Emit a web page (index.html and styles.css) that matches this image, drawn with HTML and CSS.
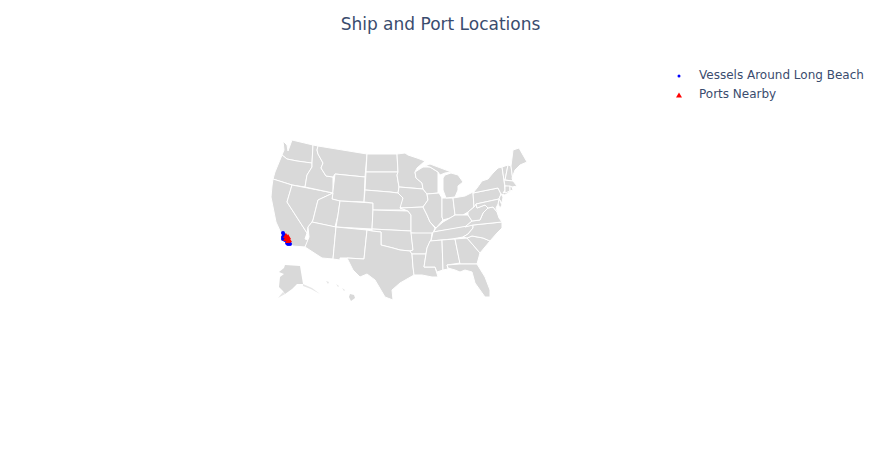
FILE: index.html
```html
<!DOCTYPE html>
<html lang="en">
<head>
<meta charset="utf-8">
<title>Ship and Port Locations</title>
<link rel="stylesheet" href="styles.css">
</head>
<body>
<main class="chart">
  <svg class="map" width="882" height="450" viewBox="0 0 882 450" aria-hidden="true">
    <g class="states">
      <path d="M283 141L287 145L288 151L292 140L313 145L312 163L310 163L297 161L287 159L282 155L284 150Z"/>
      <path d="M282 155L287 159L297 161L312 163L312 167L307 175L305 187L292 185L273 179L275 172Z"/>
      <path d="M273 179L292 185L287 202L307 233L305 239L309 240L305 247L293 246L286 240L281 233L276 222L271 197L272 186Z"/>
      <path d="M292 185L318 190L333 193L318 200L313 220L312 222L308 227L307 233L287 202Z"/>
      <path d="M313 145L318 146L317 150L318 154L323 163L321 168L326 176L333 177L333 193L305 187L307 175L312 167L312 163Z"/>
      <path d="M318 146L367 154L365 177L335 174L333 177L326 176L321 168L323 163L318 154L317 150Z"/>
      <path d="M335 174L365 177L364 202L340 201L332 199Z"/>
      <path d="M333 193L332 199L340 201L338 215L335 227L312 222L313 220L318 200Z"/>
      <path d="M340 201L373 203L373 210L372 229L336 227L338 215Z"/>
      <path d="M312 222L336 227L333 259L322 258L305 247L309 237L308 227Z"/>
      <path d="M336 227L367 230L364 259L347 258L340 258L340 260L333 259Z"/>
      <path d="M367 154L397 154L398 172L366 172Z"/>
      <path d="M366 172L398 172L397 175L399 187L398 193L390 192L365 190Z"/>
      <path d="M365 190L390 192L398 193L403 198L407 210L373 210L373 203L364 202Z"/>
      <path d="M373 210L408 211L411 215L411 231L372 229Z"/>
      <path d="M372 229L411 231L413 250L410 251L400 250L393 248L381 245L381 232L372 231Z"/>
      <path d="M367 230L372 231L381 232L381 245L393 248L400 250L410 251L412 254L413 267L414 275L400 283L392 290L393 300L385 297L375 280L367 274L360 277L353 270L347 258L364 259Z"/>
      <path d="M397 154L405 153L408 155L417 158L425 161L417 168L415 172L416 178L422 183L423 189L400 187L399 187L397 175L398 172Z"/>
      <path d="M399 187L423 189L427 194L428 200L423 207L400 208L403 198L398 193Z"/>
      <path d="M400 208L423 207L427 215L430 222L435 228L433 233L432 235L411 233L411 215L408 211Z"/>
      <path d="M411 233L432 233L431 240L427 248L426 254L412 254L410 251L413 250Z"/>
      <path d="M412 254L426 254L424 267L435 267L438 277L432 277L422 275L414 275L413 267Z"/>
      <path d="M415 172L423 167L430 167L438 172L438 193L427 194L423 189L422 183L416 178Z"/>
      <path d="M427 194L439 193L442 198L442 217L443 220L436 228L430 222L427 215L423 207L428 200Z"/>
      <path d="M442 198L453 198L455 215L450 218L443 220L442 217Z"/>
      <path d="M453 198L465 196L473 192L474 207L468 212L463 215L455 215Z"/>
      <path d="M425 166L430 164L438 167L446 170L451 172L445 173L440 175L438 172L430 167Z"/>
      <path d="M443 190L443 178L445 175L451 173L458 175L463 182L458 186L458 190L455 197L446 198Z"/>
      <path d="M433 233L436 228L443 222L450 218L455 215L463 215L468 215L472 221L465 227L433 232Z"/>
      <path d="M431 241L433 232L473 225L473 228L468 234L463 237L452 239Z"/>
      <path d="M430 241L442 240L443 270L437 272L435 267L424 267L426 254L427 248Z"/>
      <path d="M442 240L455 239L460 263L447 265L448 269L443 270Z"/>
      <path d="M455 239L467 238L480 253L477 264L460 264Z"/>
      <path d="M467 238L472 236L483 238L490 241L480 253Z"/>
      <path d="M473 225L502 222L502 228L497 233L490 241L483 238L472 236L467 238L463 237L468 234L473 228Z"/>
      <path d="M447 265L460 264L477 264L485 277L490 290L490 297L485 297L475 283L472 272L465 270L460 272L455 270L448 268Z"/>
      <path d="M465 227L472 221L480 220L483 213L488 208L493 207L497 212L499 218L502 222L473 225Z"/>
      <path d="M468 215L468 212L474 207L476 204L477 208L485 205L488 208L483 213L480 220L472 221Z"/>
      <path d="M473 193L498 188L501 194L499 199L476 204L474 207Z"/>
      <path d="M473 193L477 188L482 181L488 179L493 173L498 168L502 167L504 180L505 190L503 193L514 189L505 195L501 194L498 188Z"/>
      <path d="M501 194L503 197L502 203L499 199Z"/>
      <path d="M499 199L502 205L500 208L498 204Z"/>
      <path d="M477 208L476 204L499 199L498 204L496 208L498 213L493 207L488 208L485 205Z"/>
      <path d="M502 167L508 165L505 180L504 180Z"/>
      <path d="M508 165L511 166L513 181L505 180Z"/>
      <path d="M504 180L513 181L517 186L512 187L505 186Z"/>
      <path d="M505 186L510 186L510 191L505 193Z"/>
      <path d="M510 186L512 187L513 190L510 191Z"/>
      <path d="M511 166L513 150L519 148L527 162L520 165L515 170L512 178L513 181Z"/>
      <path class="outer" d="M285 265L300 266L303 284L297 284L292 289L285 294L283 291L279 287L280 277L284 274L279 272L284 268Z"/>
      <path class="faint" d="M303 284L312 288L320 294L311 289L303 286ZM285 294L278 298L283 292Z"/>
      <path class="outer" d="M350 294L354 295L355 298L351 301L349 297Z"/>
      <path class="faint" d="M326 281L329 282L328 284ZM336 284L339 286L338 287ZM342 288L345 290L344 291Z"/>
    </g>
    <g class="vessels">
      <circle cx="283" cy="233" r="2"/><circle cx="284" cy="235" r="2"/><circle cx="283" cy="237" r="2"/>
      <circle cx="283" cy="239" r="2"/><circle cx="285" cy="238" r="2"/><circle cx="285" cy="240" r="2"/>
      <circle cx="287" cy="243" r="2"/><circle cx="289" cy="243" r="2"/><circle cx="288" cy="244" r="2"/><circle cx="290" cy="244" r="2"/>
    </g>
    <g class="ports">
      <path d="M286 233L289 238L283 238Z"/><path d="M288 234L291 239L285 239Z"/>
      <path d="M286 236L289 241L283 241Z"/><path d="M289 237L292 242L286 242Z"/>
      <path d="M288 238L291 243L285 243Z"/>
    </g>
  </svg>
  <h1 class="title">Ship and Port Locations</h1>
  <ul class="legend">
    <li class="legend-item"><svg class="key" width="6" height="6" viewBox="0 0 6 6"><circle class="vessel-key" cx="3" cy="3" r="1.500"/></svg>Vessels Around Long Beach</li>
    <li class="legend-item"><svg class="key" width="6" height="6" viewBox="0 0 6 6"><path class="port-key" d="M3 .5L6 5.500L0 5.500Z"/></svg>Ports Nearby</li>
  </ul>
</main>
</body>
</html>
```
FILE: styles.css
```css
* { box-sizing: border-box; }
html, body { margin: 0; background: #fff; }
.chart {
  position: relative;
  width: 882px;
  height: 450px;
  overflow: hidden;
  background: #fff;
  font-family: "DejaVu Sans", Verdana, sans-serif;
  color: #3a4c6e;
}
.map { position: absolute; left: 0; top: 0; }
.states path { fill: #d9d9d9; stroke: #fff; stroke-width: 1; stroke-linejoin: round; }
.states path.outer { stroke: none; }
.states path.faint { stroke: none; fill: #e6e6e6; }
.vessels circle { fill: #0000ff; }
.ports path { fill: #ff0000; }
.title {
  position: relative;
  margin: 0;
  padding: 13px 1px 0 0;
  text-align: center;
  font-size: 17px;
  line-height: 23px;
  font-weight: 400;
}
.legend {
  position: absolute;
  left: 676px;
  top: 66px;
  margin: 0;
  padding: 0;
  list-style: none;
  font-size: 12px;
  line-height: 19px;
}
.legend-item { display: flex; align-items: center; white-space: nowrap; }
.key { margin-right: 17px; }
.vessel-key { fill: #0000ff; }
.port-key { fill: #ff0000; }
```
